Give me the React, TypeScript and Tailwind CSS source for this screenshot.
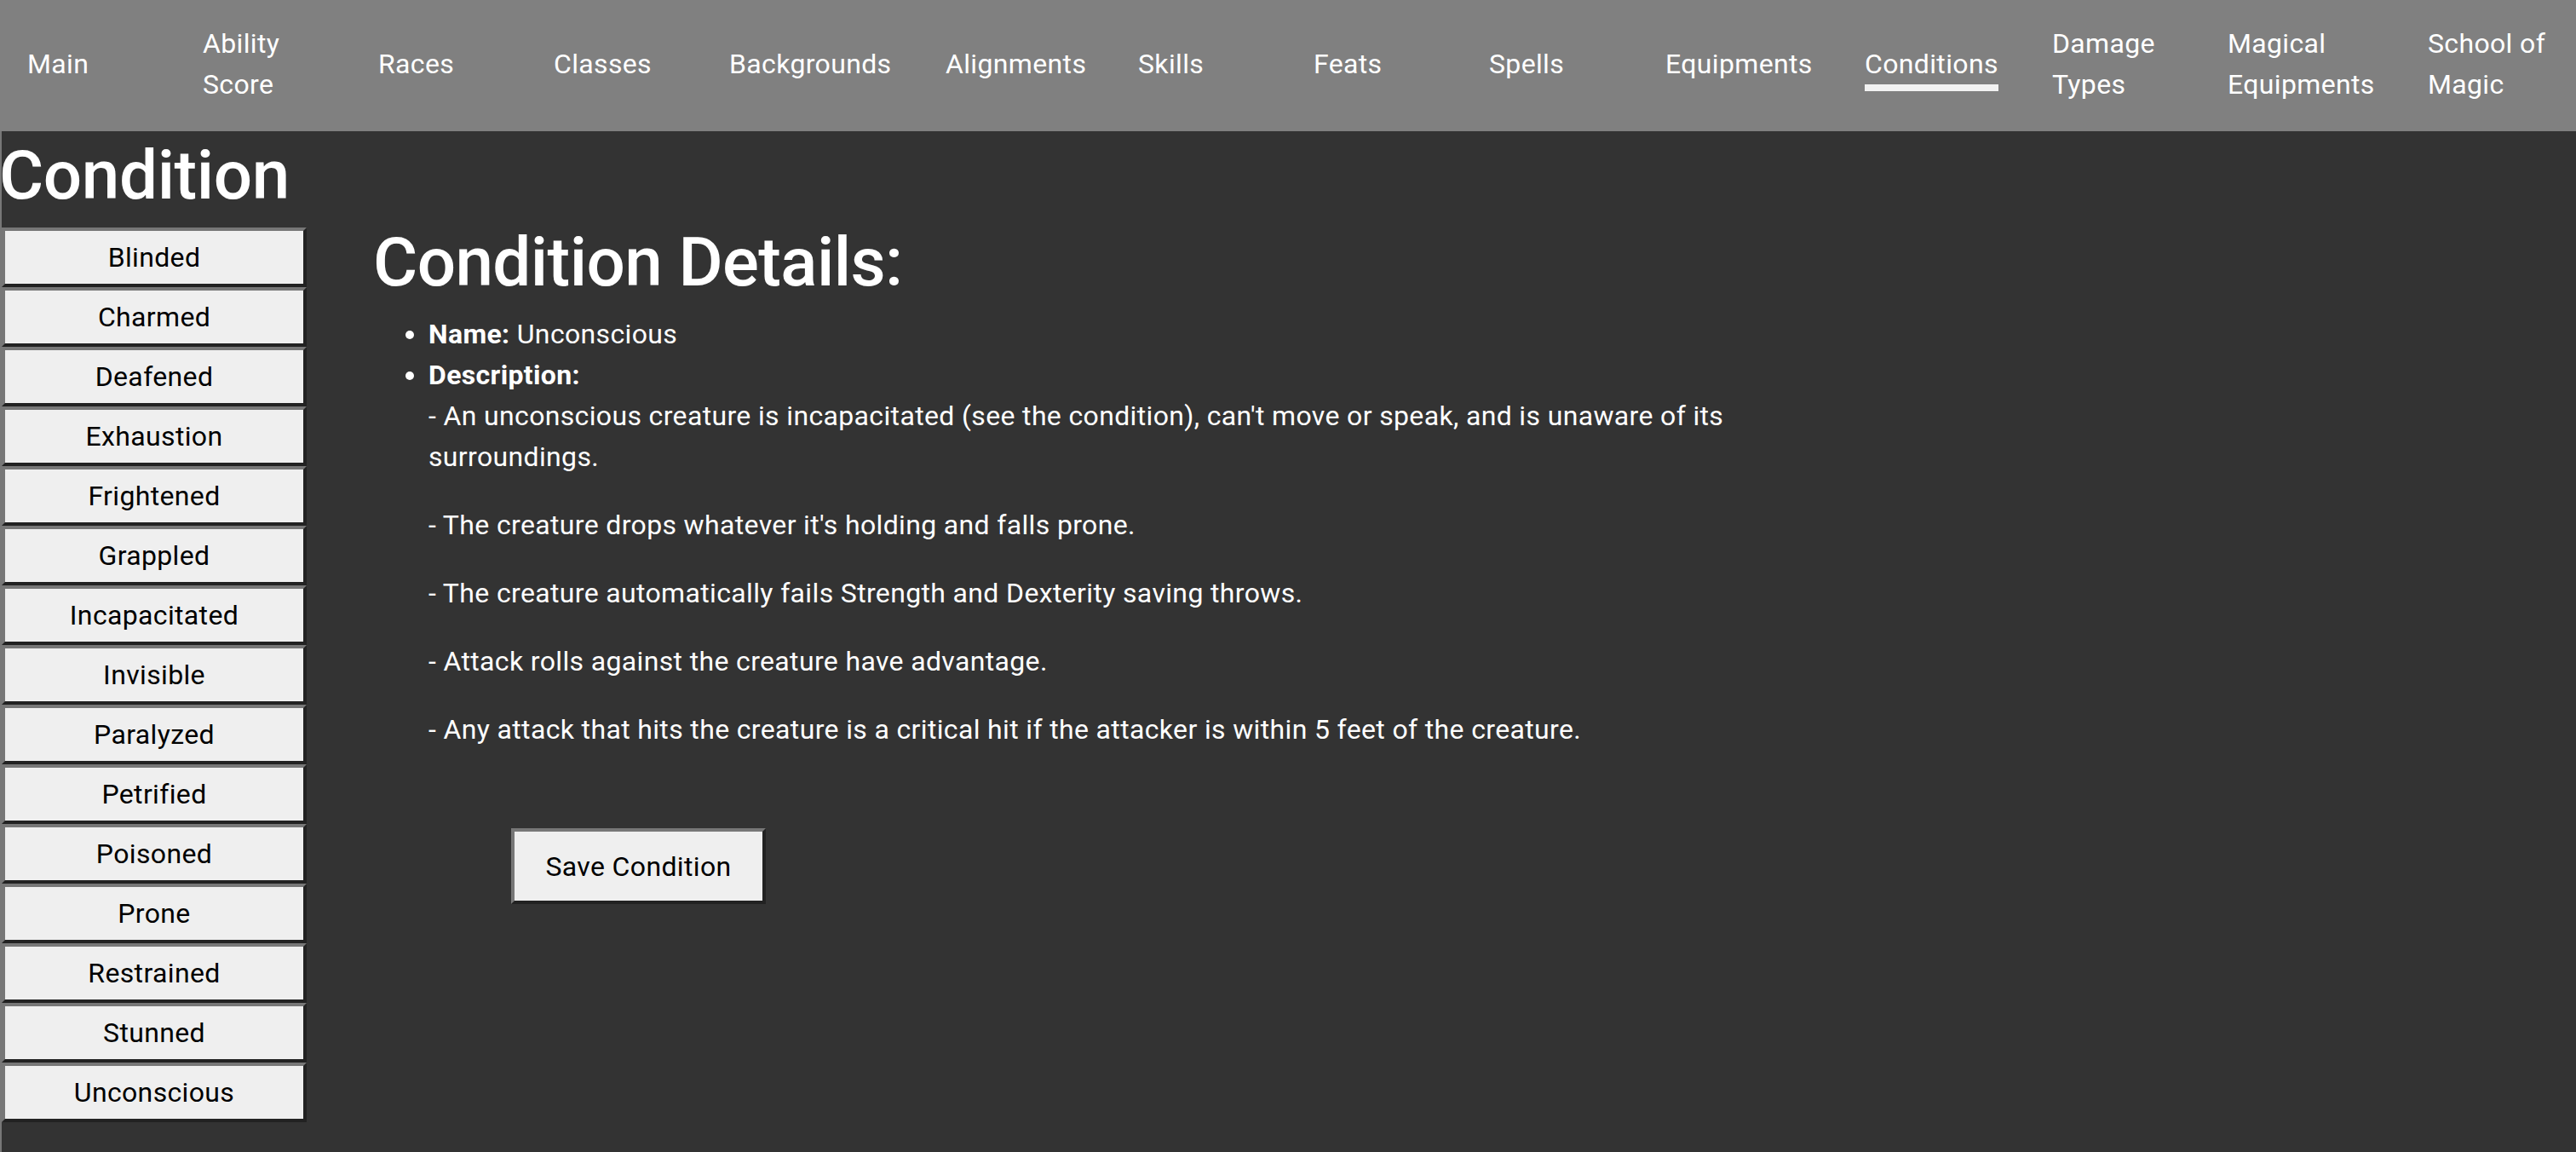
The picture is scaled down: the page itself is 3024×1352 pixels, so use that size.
import React from "react";

const navItems = [
  { label: "Main", w: "w-[206px]" },
  { label: "Ability Score", w: "w-[206px]" },
  { label: "Races", w: "w-[206px]" },
  { label: "Classes", w: "w-[206px]" },
  { label: "Backgrounds", w: "w-[254px]" },
  { label: "Alignments", w: "w-[226px]" },
  { label: "Skills", w: "w-[206px]" },
  { label: "Feats", w: "w-[206px]" },
  { label: "Spells", w: "w-[207px]" },
  { label: "Equipments", w: "w-[234px]" },
  { label: "Conditions", w: "w-[220px]", active: true },
  { label: "Damage Types", w: "w-[206px]" },
  { label: "Magical Equipments", w: "w-[235px]" },
  { label: "School of Magic", w: "w-[206px]" },
];

const conditions = [
  "Blinded",
  "Charmed",
  "Deafened",
  "Exhaustion",
  "Frightened",
  "Grappled",
  "Incapacitated",
  "Invisible",
  "Paralyzed",
  "Petrified",
  "Poisoned",
  "Prone",
  "Restrained",
  "Stunned",
  "Unconscious",
];

const description = [
  "- An unconscious creature is incapacitated (see the condition), can't move or speak, and is unaware of its surroundings.",
  "- The creature drops whatever it's holding and falls prone.",
  "- The creature automatically fails Strength and Dexterity saving throws.",
  "- Attack rolls against the creature have advantage.",
  "- Any attack that hits the creature is a critical hit if the attacker is within 5 feet of the creature.",
];

export default function App() {
  return (
    <div className="min-h-screen bg-[#333333] font-['Roboto',sans-serif] tracking-[0.35px] text-white">
      <nav className="flex h-[154px] bg-[#808080]">
        {navItems.map((item) => (
          <div
            key={item.label}
            className={`${item.w} flex shrink-0 items-center px-[32px] pb-[4px]`}
          >
            {item.active ? (
              <a className="-mb-[8px] block border-b-[8px] border-[#f2f2f2] text-[32px] leading-[48px] text-white">
                {item.label}
              </a>
            ) : (
              <a className="block text-[32px] leading-[48px] text-white">
                {item.label}
              </a>
            )}
          </div>
        ))}
      </nav>

      <div className="flex min-h-[1198px] border-l-2 border-[#777777]">
        <aside className="w-[358px] shrink-0">
          <h1 className="-ml-[3px] mt-[4px] text-[80px] font-medium leading-[96px] tracking-[-0.4px] text-white">
            Condition
          </h1>
          <div className="mt-[13px] flex flex-col">
            {conditions.map((c) => (
              <button
                key={c}
                className="h-[70px] w-full border-[4px] border-t-[#777777] border-l-[#777777] border-b-[#222222] border-r-[#222222] bg-[#efefef] text-[32px] leading-[48px] text-black"
              >
                {c}
              </button>
            ))}
          </div>
        </aside>

        <main className="ml-[78px] w-[1700px]">
          <h1 className="mt-[106px] text-[80px] font-medium leading-[96px] tracking-[-0.6px] text-white">
            Condition Details:
          </h1>
          <ul className="mt-[12px] list-disc pl-[65px] text-[32px] leading-[48px]">
            <li>
              <strong className="font-bold">Name:</strong> Unconscious
            </li>
            <li>
              <strong className="font-bold">Description:</strong>
              <div className="flex flex-col gap-[32px]">
                {description.map((d) => (
                  <p key={d}>{d}</p>
                ))}
              </div>
            </li>
          </ul>
          <button className="ml-[162px] mt-[92px] h-[89px] w-[299px] border-[4px] border-t-[#777777] border-l-[#777777] border-b-[#222222] border-r-[#222222] bg-[#efefef] text-[32px] leading-[48px] text-black">
            Save Condition
          </button>
        </main>
      </div>
    </div>
  );
}
